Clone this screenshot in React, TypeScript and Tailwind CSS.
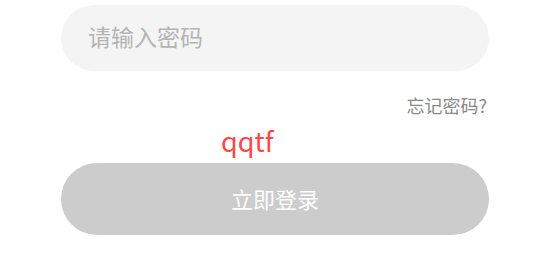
import React from 'react';

const App = () => {
  return (
    <div
      className="w-[550px] h-[275px] bg-white"
      style={{ fontFamily: '"Noto Sans CJK SC", "Noto Sans", sans-serif' }}
    >
      <div className="w-[428px] mx-auto pt-[5px] flex flex-col">
        <div className="h-[66px] rounded-full bg-[#f4f4f4] flex items-center pl-[27px] pb-[3px]">
          <span className="text-[23px] text-[#b4b4b4]">请输入密码</span>
        </div>

        <div className="mt-[24px] flex justify-end pr-[2px]">
          <span className="text-[18px] leading-[21px] text-[#8a8a8a]">忘记密码?</span>
        </div>

        <div className="mt-[10px] pl-[160px]">
          <span className="text-[27px] leading-[30px] text-[#ff4646]">qqtf</span>
        </div>

        <button className="mt-[6px] h-[72px] rounded-full bg-[#cccccc] flex items-center justify-center pb-[2px]">
          <span className="text-[22px] text-white">立即登录</span>
        </button>
      </div>
    </div>
  );
};

export default App;
